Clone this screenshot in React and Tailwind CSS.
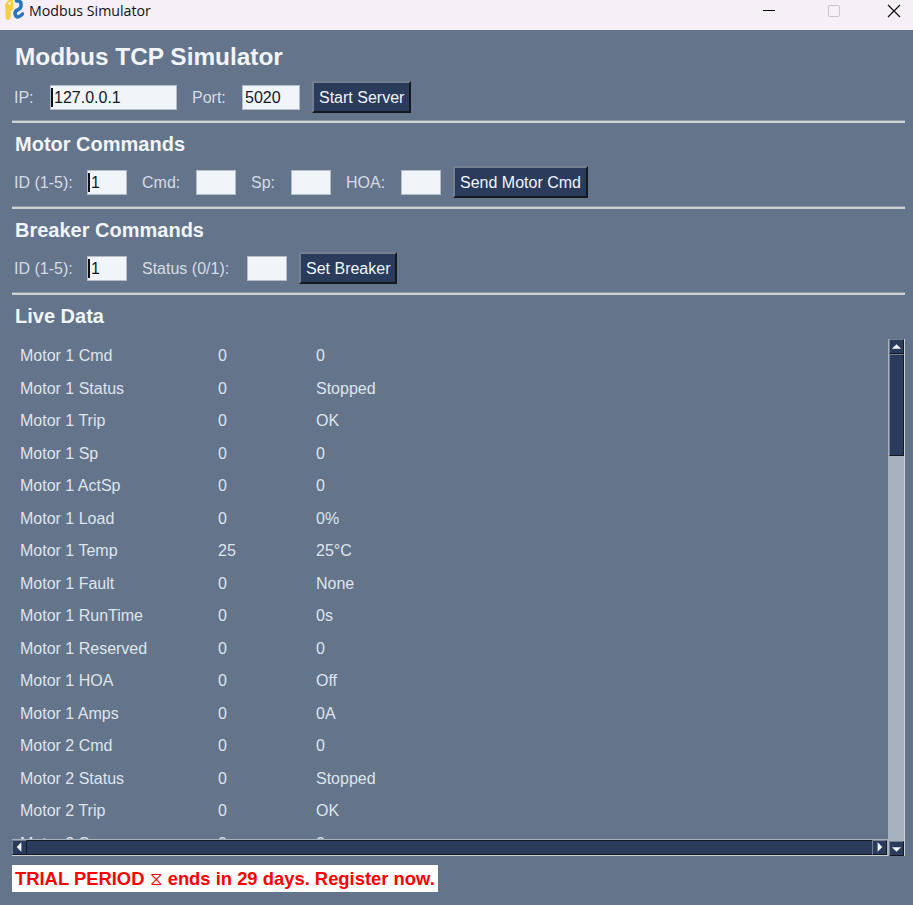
import React from "react";

const rows = [
  ["Motor 1 Cmd", "0", "0"],
  ["Motor 1 Status", "0", "Stopped"],
  ["Motor 1 Trip", "0", "OK"],
  ["Motor 1 Sp", "0", "0"],
  ["Motor 1 ActSp", "0", "0"],
  ["Motor 1 Load", "0", "0%"],
  ["Motor 1 Temp", "25", "25°C"],
  ["Motor 1 Fault", "0", "None"],
  ["Motor 1 RunTime", "0", "0s"],
  ["Motor 1 Reserved", "0", "0"],
  ["Motor 1 HOA", "0", "Off"],
  ["Motor 1 Amps", "0", "0A"],
  ["Motor 2 Cmd", "0", "0"],
  ["Motor 2 Status", "0", "Stopped"],
  ["Motor 2 Trip", "0", "OK"],
  ["Motor 2 Sp", "0", "0"],
];

// --- Icons ---
const PyIcon = () => (
  <svg width="19" height="21" viewBox="0 0 19 21" className="shrink-0">
    <path d="M2 2 Q2 0 4 0 L8 0 L8.5 6 Q8.5 10 6 11 L5.5 18 Q5 20 3.5 20 Q1 20 0.5 18 L0.5 12 L0 5 Q0 3 2 2 Z" fill="#f8cf4a" />
    <circle cx="4.5" cy="3.5" r="1.2" fill="#f8f2e8" />
    <path d="M11.5 1 L13.5 1 Q16 1.5 16 4 L16 6 Q15.5 9 12.5 10 Q10 11 10 13.5 Q10.5 17 13 17 Q15.5 16.5 17.5 14" fill="none" stroke="#2b78b8" strokeWidth="3.6" strokeLinecap="round" />
  </svg>
);

const Field = ({ value = "", caret = false, className = "w-[40px]" }) => (
  <div className={`h-[25px] bg-[#f1f5f9] border border-[#b4bcc6] flex items-center pt-[1px] text-[16px] leading-none text-[#111827] relative ${caret ? "pl-[3px]" : "pl-[2px]"} ${className}`}>
    {caret && <span className="absolute left-[0px] top-[2px] h-[19px] w-[2px] bg-[#111]" />}
    {value}
  </div>
);

const Btn = ({ children }) => (
  <button className="h-[32px] px-[5px] pt-[2px] bg-[#2a3b5c] text-[#f1f5f9] text-[16px] border-2 border-t-[#74808f] border-l-[#74808f] border-r-[#14181f] border-b-[#14181f]">
    {children}
  </button>
);

const Label = ({ children, className = "" }) => (
  <span className={`pt-[1px] text-[16px] text-[#d5dce5] ${className}`}>{children}</span>
);

const Rule = () => <div className="h-[2px] bg-[#cdd1d2] ml-[12px] mr-[8px] shadow-[0_-1px_0_#8f9aa6]" />;

const Heading = ({ children }) => (
  <h2 className="h-[32px] pt-[9px] text-[20px] leading-[24px] font-bold text-[#f1f5f9] px-[15px]">{children}</h2>
);

const Arrow = ({ dir }) => {
  const pts = {
    up: "2,9 12,9 7,4",
    down: "2,5 12,5 7,10",
    left: "9,2 9,12 4,7",
    right: "5,2 5,12 10,7",
  };
  return (
    <svg width="14" height="14" viewBox="0 0 14 14">
      <polygon points={pts[dir]} fill="#f1f5f9" />
    </svg>
  );
};

const ScrollBtn = ({ dir }) => (
  <div className="w-[15px] h-[15px] shrink-0 bg-[#2a3b5c] border border-t-[#74808f] border-l-[#74808f] border-r-[#14181f] border-b-[#14181f] flex items-center justify-center">
    <Arrow dir={dir} />
  </div>
);

export default function App() {
  return (
    <div className="w-[913px] h-[905px] bg-[#64748b] overflow-hidden font-['Liberation_Sans',Arial,sans-serif]">
      {/* title bar */}
      <div className="h-[30px] bg-[#f6eff8] flex items-start pl-[5px]">
        <PyIcon />
        <span className="ml-[5px] mt-[1px] text-[14.2px] leading-[19px] text-[#111] font-['Open_Sans',sans-serif]">Modbus Simulator</span>
        <div className="ml-auto h-[21px] flex items-center">
          <div className="w-[12px] h-[1px] bg-black mr-[53px]" />
          <div className="w-[12px] h-[12px] border border-[#c9c6cd] rounded-[2px] mr-[47px]" />
          <svg width="14" height="14" viewBox="0 0 14 14" className="mr-[12px]">
            <path d="M1 1 L13 13 M13 1 L1 13" stroke="#111" strokeWidth="1.2" />
          </svg>
        </div>
      </div>

      {/* header */}
      <h1 className="h-[51px] pt-[13px] px-[15px] text-[24.4px] leading-[27px] font-bold text-[#f1f5f9]">Modbus TCP Simulator</h1>
      <div className="h-[40px] flex items-start pl-[14px]">
        <div className="h-[32px] flex items-center">
          <Label className="w-[36px]">IP:</Label>
          <Field value="127.0.0.1" caret className="w-[127px]" />
          <Label className="ml-[15px] w-[50px]">Port:</Label>
          <Field value="5020" className="w-[58px]" />
          <div className="ml-[12px]"><Btn>Start Server</Btn></div>
        </div>
      </div>
      <Rule />

      {/* motor commands */}
      <Heading>Motor Commands</Heading>
      <div className="h-[52px] pt-[11px] pl-[14px]">
        <div className="h-[32px] flex items-center">
          <Label className="w-[73px]">ID (1-5):</Label>
          <Field value="1" caret />
          <Label className="ml-[15px] w-[54px]">Cmd:</Label>
          <Field />
          <Label className="ml-[15px] w-[40px]">Sp:</Label>
          <Field />
          <Label className="ml-[15px] w-[55px]">HOA:</Label>
          <Field />
          <div className="ml-[12px]"><Btn>Send Motor Cmd</Btn></div>
        </div>
      </div>
      <Rule />

      {/* breaker commands */}
      <Heading>Breaker Commands</Heading>
      <div className="h-[52px] pt-[11px] pl-[14px]">
        <div className="h-[32px] flex items-center">
          <Label className="w-[73px]">ID (1-5):</Label>
          <Field value="1" caret />
          <Label className="ml-[15px] w-[105px]">Status (0/1):</Label>
          <Field />
          <div className="ml-[12px]"><Btn>Set Breaker</Btn></div>
        </div>
      </div>
      <Rule />

      {/* live data */}
      <Heading>Live Data</Heading>
      <div className="ml-[12px] mt-[12px] w-[894px] flex">
        <div className="w-[876px] flex flex-col">
          <div className="h-[500px] overflow-hidden pt-[1px]">
            {rows.map((r) => (
              <div key={r[0]} className="h-[32.5px] flex items-center text-[16px] text-[#dfe5ec] pl-[8px]">
                <span className="w-[198px]">{r[0]}</span>
                <span className="w-[98px]">{r[1]}</span>
                <span>{r[2]}</span>
              </div>
            ))}
          </div>
          <div className="h-[17px] flex items-center bg-[#a8b2bf] border-b border-[#cbd0d3] pr-[1px]">
            <ScrollBtn dir="left" />
            <div className="flex-1 h-[15px] bg-[#2a3b5c] border-y border-[#14181f]" />
            <ScrollBtn dir="right" />
          </div>
        </div>
        <div className="w-[17px] bg-[#a8b2bf] flex flex-col items-center border-r border-[#cbd0d3]">
          <ScrollBtn dir="up" />
          <div className="w-[15px] h-[102px] bg-[#2a3b5c] border border-t-[#74808f] border-l-[#74808f] border-r-[#14181f] border-b-[#14181f]" />
          <div className="mt-auto"><ScrollBtn dir="down" /></div>
        </div>
      </div>

      {/* trial banner */}
      <div className="ml-[12px] mt-[9px] inline-flex h-[27px] items-center bg-white pl-[3px] pr-[3px] text-[18.4px] font-bold text-[#ff0000] whitespace-pre">
        TRIAL PERIOD <span className="font-normal text-[18.4px]">⧖</span> ends in 29 days. Register now.
      </div>
    </div>
  );
}
